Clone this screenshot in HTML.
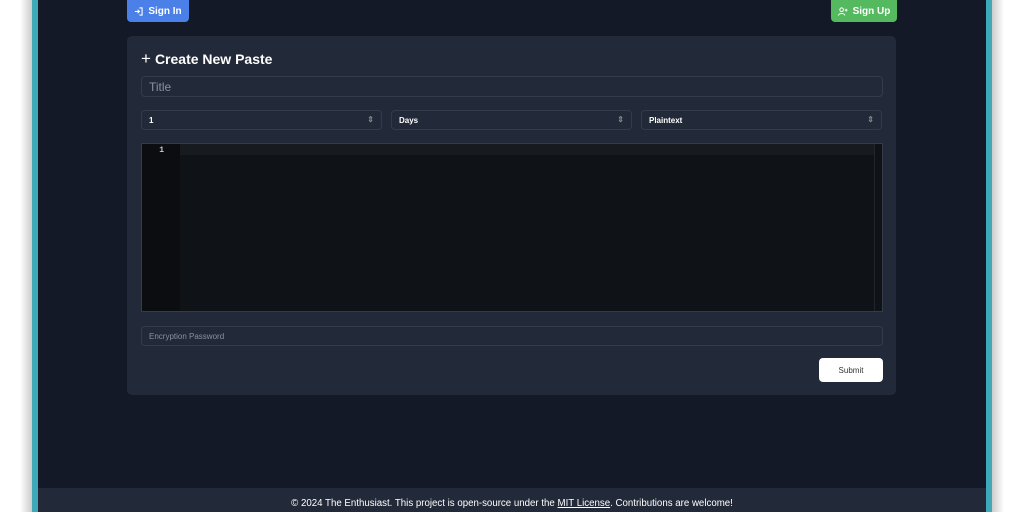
<!DOCTYPE html>
<html><head><meta charset="utf-8"><style>
*{box-sizing:border-box;margin:0;padding:0}
body{width:1024px;height:512px;overflow:hidden;background:#fff;font-family:"Liberation Sans",sans-serif;position:relative}
.tl{position:absolute;left:32px;top:0;width:6px;height:512px;background:#3fa9b8}
.tr{position:absolute;left:986px;top:0;width:6px;height:512px;background:#3fa9b8}
.sh{position:absolute;left:20px;top:0;width:12px;height:512px;background:linear-gradient(90deg,#fff,#ccc)}
.sh2{position:absolute;left:992px;top:0;width:12px;height:512px;background:linear-gradient(90deg,#ccc,#fff)}
.main{position:absolute;left:38px;top:0;width:948px;height:512px;background:#131927}
.btn{position:absolute;top:0;height:22px;border-radius:0 0 4px 4px;color:#fff;font-weight:bold;font-size:10px;display:flex;align-items:center;justify-content:center;gap:5px}
.card{position:absolute;left:127px;top:36px;width:769px;height:359px;background:#222938;border-radius:5px}
h1{position:absolute;left:14px;top:13px;color:#fff;font-size:14px;font-weight:bold}
.in{position:absolute;border:1px solid #343c4c;border-radius:4px;background:#222938;color:#8a919e}
.sel{top:74px;height:20px;width:241px;font-size:8px;color:#fff;font-weight:bold;padding:5px 7px}
.sel:after{content:"⇕";position:absolute;right:7px;top:4px;color:#888;font-size:8px}
.ed{position:absolute;left:14px;top:107px;width:742px;height:169px;background:#0f1216;border:1px solid #343c4c}
.gut{position:absolute;left:0;top:0;width:38px;height:100%;background:#0b0d10;color:#ccc;font-size:8px;font-family:"Liberation Mono",monospace;text-align:right;padding:2px 16px 0 0;font-weight:bold}
.line{position:absolute;left:38px;top:0;right:8px;height:11px;background:#171a1f}
.sb{position:absolute;right:0;top:0;width:8px;height:100%;border-left:1px solid #22262c}
.sub{position:absolute;left:692px;top:322px;width:64px;height:24px;background:#fff;border-radius:4px;font-size:8px;color:#333;display:flex;align-items:center;justify-content:center}
.foot{position:absolute;left:38px;top:488px;width:948px;height:24px;background:#222938;color:#fff;font-size:9.7px;text-align:center;padding-top:10px}
</style></head><body>
<div class="sh"></div><div class="sh2"></div>
<div class="tl"></div><div class="tr"></div>
<div class="main"></div>
<div class="btn" style="left:127px;width:62px;background:#4a80e8">
<svg width="9" height="9" viewBox="0 0 10 10" fill="none" stroke="#fff" stroke-width="1.2"><path d="M6 1h3v8H6M1 5h5M4 3l2 2-2 2"/></svg>Sign In</div>
<div class="btn" style="left:831px;width:66px;background:#55b95f">
<svg width="10" height="9" viewBox="0 0 11 10" fill="none" stroke="#fff" stroke-width="1.1"><circle cx="4" cy="3" r="2"/><path d="M0.5 9.5c0-3 7-3 7 0M9 2v3M7.5 3.5h3"/></svg>Sign Up</div>
<div class="card">
<h1><span style="font-weight:normal;font-size:17px;margin-right:4px">+</span>Create New Paste</h1>
<div class="in" style="left:14px;top:40px;width:742px;height:21px;font-size:12px;padding:3px 7px">Title</div>
<div class="in sel" style="left:14px">1</div>
<div class="in sel" style="left:264px">Days</div>
<div class="in sel" style="left:514px">Plaintext</div>
<div class="ed"><div class="gut">1</div><div class="line"></div><div class="sb"></div></div>
<div class="in" style="left:14px;top:290px;width:742px;height:20px;font-size:8px;padding:5px 7px">Encryption Password</div>
<div class="sub">Submit</div>
</div>
<div class="foot">© 2024 The Enthusiast. This project is open-source under the <u>MIT License</u>. Contributions are welcome!</div>
</body></html>
